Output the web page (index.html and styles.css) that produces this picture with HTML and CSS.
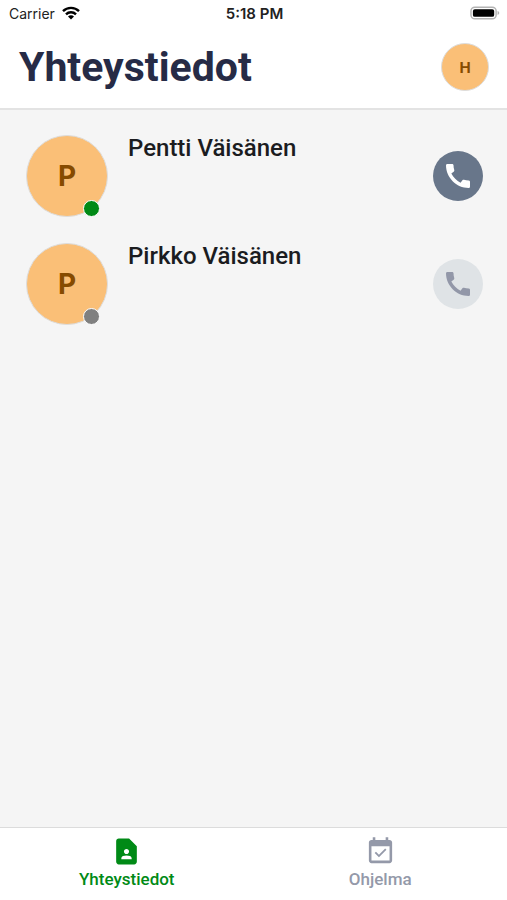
FILE: index.html
```html
<!DOCTYPE html>
<html lang="fi">
<head>
<meta charset="utf-8">
<meta name="viewport" content="width=device-width, initial-scale=1">
<title>Yhteystiedot</title>
<link rel="stylesheet" href="styles.css">
</head>
<body>
<div class="app">
  <div class="status">
    <div class="status-left">
      <span>Carrier</span>
      <svg class="wifi" viewBox="0 0 18 14" aria-hidden="true">
        <g fill="none" stroke="#000" stroke-width="2.4">
          <path d="M1 5.2a11.3 11.3 0 0 1 16 0"/>
          <path d="M4 8.4a7 7 0 0 1 10 0"/>
        </g>
        <path d="M9 13.6l-3-3.1a4.2 4.2 0 0 1 6 0z"/>
      </svg>
    </div>
    <span class="time">5:18 PM</span>
    <div class="status-right">
      <svg class="battery" viewBox="0 0 31 14" aria-hidden="true">
        <rect x="1" y="1" width="26" height="12" rx="4" fill="#fff" stroke="#b3b3b3" stroke-width="1.5"/>
        <rect x="3" y="3" width="22" height="8" rx="2"/>
        <path d="M28.500 5v4c1-.4 1.700-1.100 1.700-2s-.7-1.600-1.700-2z" fill="#b3b3b3"/>
      </svg>
    </div>
  </div>
  <header class="header">
    <h1>Yhteystiedot</h1>
    <button class="avatar avatar-small" type="button">H</button>
  </header>
  <main class="main">
    <ul class="contacts">
      <li class="contact">
        <div class="avatar">P<span class="presence online"></span></div>
        <h2>Pentti Väisänen</h2>
        <button class="call" type="button" aria-label="Soita: Pentti Väisänen">
          <svg viewBox="0 0 24 24" aria-hidden="true"><path d="M20.010 15.380c-1.230 0-2.420-.2-3.530-.56-.35-.12-.74-.03-1.010.24l-1.570 1.970c-2.830-1.350-5.480-3.900-6.890-6.830l1.950-1.660c.27-.28.35-.67.240-1.020-.37-1.110-.56-2.300-.56-3.530 0-.54-.45-.99-.99-.99H4.190C3.650 3 3 3.240 3 3.990 3 13.280 10.730 21 20.010 21c.71 0 .99-.63.990-1.180v-3.450c0-.54-.45-.99-.99-.99z"/></svg>
        </button>
      </li>
      <li class="contact">
        <div class="avatar">P<span class="presence"></span></div>
        <h2>Pirkko Väisänen</h2>
        <button class="call" type="button" disabled aria-label="Soita: Pirkko Väisänen">
          <svg viewBox="0 0 24 24" aria-hidden="true"><path d="M20.010 15.380c-1.230 0-2.420-.2-3.530-.56-.35-.12-.74-.03-1.010.24l-1.570 1.970c-2.830-1.350-5.480-3.900-6.890-6.830l1.950-1.660c.27-.28.35-.67.240-1.020-.37-1.110-.56-2.300-.56-3.530 0-.54-.45-.99-.99-.99H4.190C3.650 3 3 3.240 3 3.990 3 13.280 10.730 21 20.010 21c.71 0 .99-.63.990-1.180v-3.450c0-.54-.45-.99-.99-.99z"/></svg>
        </button>
      </li>
    </ul>
  </main>
  <nav class="tabs">
    <a class="tab active" href="#yhteystiedot" aria-current="page">
      <svg viewBox="0 0 24 24" aria-hidden="true"><path d="M14 2H6c-1.100 0-2 .9-2 2v16c0 1.100.9 2 2 2h12c1.100 0 2-.9 2-2V8l-6-6zm-2 8c1.100 0 2 .9 2 2s-.9 2-2 2-2-.9-2-2 .9-2 2-2zm4 8H8v-.57c0-.81.480-1.530 1.220-1.850.85-.37 1.790-.58 2.780-.58s1.930.21 2.780.58c.74.32 1.220 1.040 1.220 1.850V18z"/></svg>
      <span>Yhteystiedot</span>
    </a>
    <a class="tab" href="#ohjelma">
      <svg viewBox="0 0 24 24" aria-hidden="true"><path d="M19 3h-1V1h-2v2H8V1H6v2H5c-1.110 0-2 .9-2 2v14c0 1.100.89 2 2 2h14c1.100 0 2-.9 2-2V5c0-1.100-.9-2-2-2zm0 16H5V8h14v11z"/><path d="M15.600 9.700l-4.800 4.800-2.300-2.300-1 1 3.300 3.300 5.800-5.800z"/></svg>
      <span>Ohjelma</span>
    </a>
  </nav>
</div>
</body>
</html>
```
FILE: styles.css
```css
* {
  box-sizing: border-box;
}

body {
  margin: 0;
  background: #f5f5f5;
  color: #1b1c1f;
  font-family: Roboto, "Liberation Sans", sans-serif;
}

h1,
h2,
ul {
  margin: 0;
  padding: 0;
}

button {
  padding: 0;
  border: 0;
  font-family: inherit;
}

.app {
  display: flex;
  flex-direction: column;
  min-height: 100vh;
}

.status {
  display: grid;
  grid-template-columns: 1fr auto 1fr;
  align-items: center;
  height: 26px;
  padding: 0 7px 0 9px;
  background: #fff;
  color: #222;
  font-family: Inter, sans-serif;
  font-size: 14px;
}

.status-left {
  display: flex;
  align-items: center;
  gap: 7px;
}

.status-right {
  display: flex;
  justify-content: flex-end;
}

.wifi {
  width: 18px;
  height: 14px;
}

.battery {
  width: 30px;
  height: 14px;
}

.time {
  font-size: 15px;
  font-weight: 600;
}

.header {
  display: flex;
  align-items: center;
  justify-content: space-between;
  height: 84px;
  padding: 0 18px 0 19px;
  border-bottom: 2px solid #e3e3e3;
  background: #fff;
}

h1 {
  color: #262b46;
  font-size: 41px;
  font-weight: 700;
  line-height: 48px;
}

.avatar {
  position: relative;
  display: flex;
  flex: none;
  align-items: center;
  justify-content: center;
  width: 82px;
  height: 82px;
  border: 1px solid #dddddd;
  border-radius: 50%;
  background: #fabf77;
  color: #864b00;
  font-family: Inter, sans-serif;
  font-size: 28px;
  font-weight: 700;
}

.avatar-small {
  width: 48px;
  height: 48px;
  font-size: 15px;
}

.presence {
  position: absolute;
  right: 7px;
  bottom: -1px;
  width: 17px;
  height: 17px;
  border: 1px solid #fff;
  border-radius: 50%;
  background: #808080;
}

.online {
  background: #008a16;
}

.main {
  flex: 1;
  padding: 25px 24px 24px 26px;
}

.contacts {
  display: flex;
  flex-direction: column;
  gap: 26px;
  list-style: none;
}

.contact {
  display: flex;
  align-items: center;
  gap: 20px;
}

h2 {
  flex: 1;
  align-self: flex-start;
  font-size: 24px;
  font-weight: 500;
  line-height: 26px;
}

.call {
  display: grid;
  place-items: center;
  width: 50px;
  height: 50px;
  border-radius: 50%;
  background: #68768a;
  color: #fff;
}

.call:disabled {
  background: #dfe3e6;
  color: #9297a8;
}

.call svg {
  width: 32px;
  height: 32px;
  fill: currentColor;
}

.tabs {
  display: flex;
  height: 73px;
  border-top: 1px solid #dcdcdc;
  background: #fff;
}

.tab {
  display: flex;
  flex: 1;
  flex-direction: column;
  align-items: center;
  gap: 2px;
  padding-top: 8px;
  color: #9499a9;
  font-size: 17px;
  font-weight: 500;
  line-height: 20px;
  text-decoration: none;
}

.tab svg {
  width: 31px;
  height: 31px;
  fill: currentColor;
}

.active {
  color: #008a16;
}
```
